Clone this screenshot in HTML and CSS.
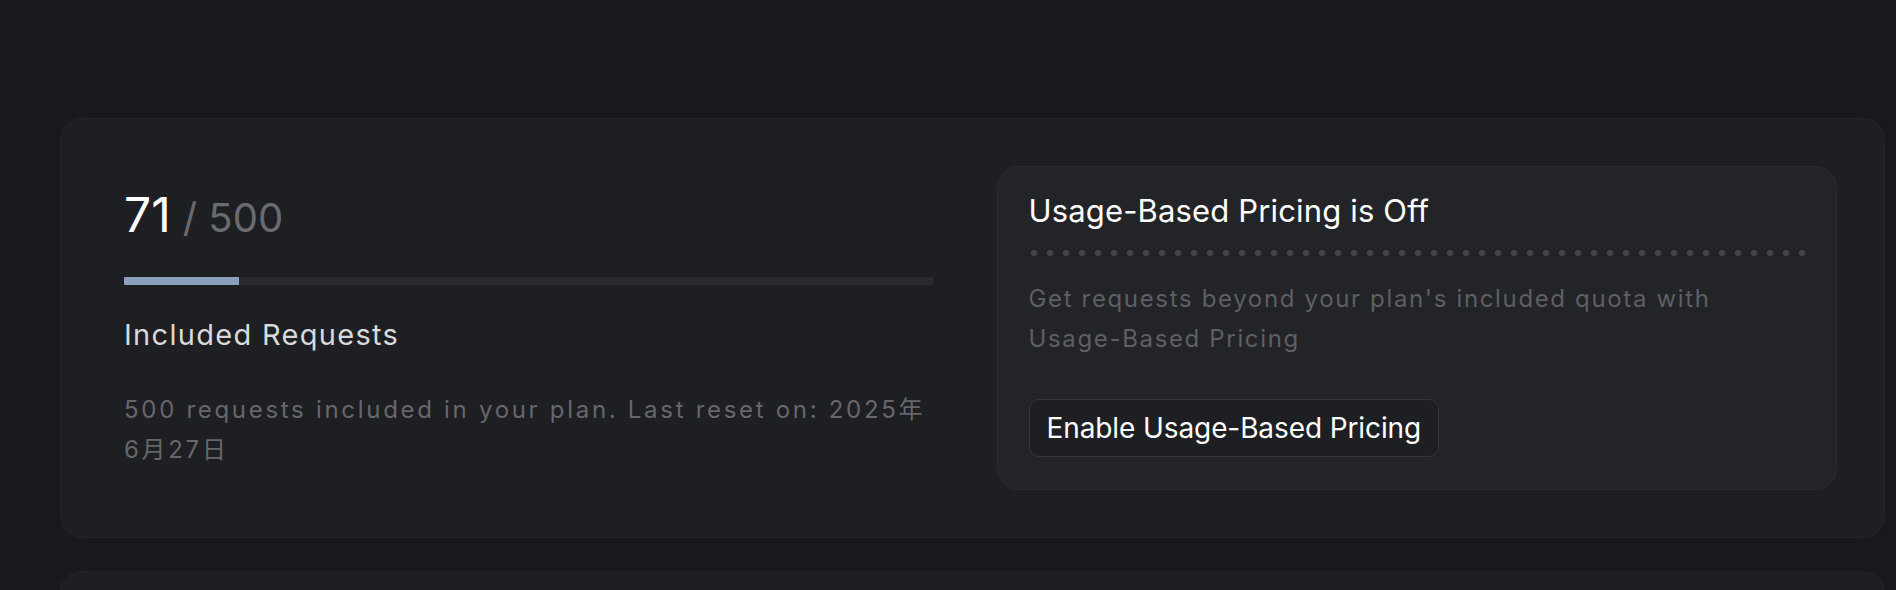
FILE: index.html
```html
<!DOCTYPE html>
<html lang="en">
<head>
<meta charset="utf-8">
<title>Usage</title>
<link rel="stylesheet" href="styles.css">
</head>
<body>
<main class="page">
  <section class="card">
    <div class="usage">
      <div class="count"><span class="count-used">71</span><span class="count-total">/ 500</span></div>
      <div class="bar"><div class="bar-fill" style="width: 14.2%"></div></div>
      <h2 class="usage-title">Included Requests</h2>
      <p class="usage-desc">500 requests included in your plan. Last reset on: 2025年6月27日</p>
    </div>
    <div class="panel">
      <h3 class="panel-title">Usage-Based Pricing is Off</h3>
      <div class="dots"></div>
      <p class="panel-desc">Get requests beyond your plan's included quota with Usage-Based Pricing</p>
      <button class="btn" type="button">Enable Usage-Based Pricing</button>
    </div>
  </section>
  <section class="card card-next"></section>
</main>
</body>
</html>
```

FILE: styles.css
```css
html, body {
  margin: 0;
  padding: 0;
  background: #18191d;
}

body {
  font-family: Inter, "Noto Sans", "Noto Sans CJK SC", sans-serif;
  color: #ffffff;
  overflow: hidden;
}

.page {
  padding: 118px 11px 0 60px;
  display: flex;
  flex-direction: column;
  gap: 33px;
}

.card {
  background: #1e1f23;
  border-radius: 22px;
  box-shadow: inset 0 0 0 1px rgba(255, 255, 255, 0.025);
  padding: 48px;
  display: grid;
  grid-template-columns: 1fr 1fr;
  gap: 48px;
}

.card-next {
  height: 200px;
  padding: 0;
}

.usage {
  padding: 20px 16px;
}

.count {
  display: flex;
  align-items: baseline;
  line-height: 58px;
  height: 58px;
}

.count-used {
  font-size: 48px;
  color: #ffffff;
  font-weight: 400;
}

.count-total {
  font-size: 40px;
  color: #6a6b70;
  margin-left: 12px;
}

.bar {
  margin-top: 33px;
  height: 8px;
  background: #2a2b30;
  border-radius: 1px;
  overflow: hidden;
}

.bar-fill {
  height: 100%;
  background: #8aa0bb;
}

.usage-title {
  margin: 33px 0 0;
  font-size: 29px;
  line-height: 34px;
  letter-spacing: 1.3px;
  font-weight: 400;
  color: #d9d9db;
}

.usage-desc {
  margin: 38px 0 0;
  font-size: 24px;
  line-height: 40px;
  letter-spacing: 2.7px;
  color: #66676b;
}

.panel {
  background: #232428;
  border-radius: 22px;
  box-shadow: inset 0 0 0 1px rgba(255, 255, 255, 0.03);
  padding: 27px 32px 33px;
  display: flex;
  flex-direction: column;
  align-items: flex-start;
}

.panel-title {
  margin: 0;
  font-size: 31px;
  line-height: 36px;
  letter-spacing: 0.15px;
  font-weight: 400;
  color: #ffffff;
}

.dots {
  align-self: stretch;
  margin-top: 21px;
  height: 6px;
  background-image: radial-gradient(circle at 3px 3px, #414247 2.8px, transparent 3.3px);
  background-size: 16px 6px;
  background-position: 2px 0;
}

.panel-desc {
  margin: 23px 0 0;
  font-size: 24px;
  line-height: 40px;
  letter-spacing: 1.65px;
  color: #5e5f63;
}

.btn {
  margin-top: 40px;
  font-family: inherit;
  font-size: 28px;
  line-height: 34px;
  letter-spacing: -0.1px;
  padding: 11px 17px;
  color: #ffffff;
  background: #1e1f23;
  border: 1px solid #35363b;
  border-radius: 10px;
  cursor: pointer;
}
```
